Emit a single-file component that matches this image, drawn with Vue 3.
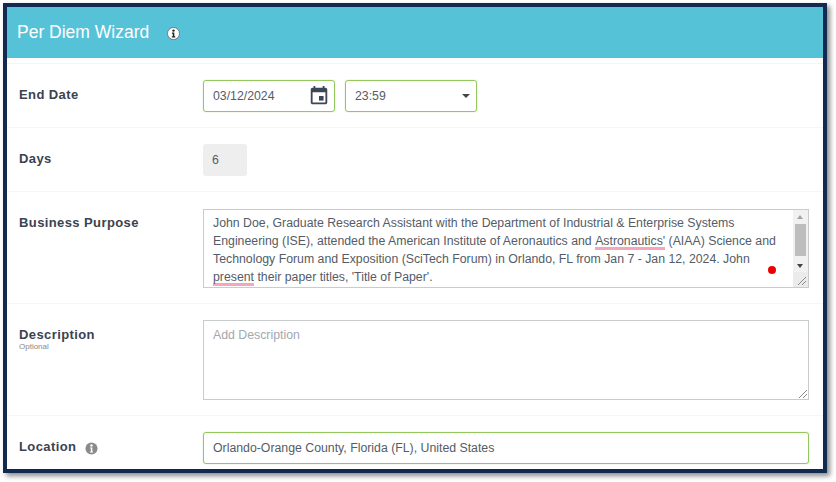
<script setup>
const lines = [
  { id: 1, parts: [{ t: 'John Doe, Graduate Research Assistant with the Department of Industrial & Enterprise Systems' }] },
  { id: 2, parts: [{ t: 'Engineering (ISE), attended the American Institute of Aeronautics and ' }, { t: "Astronautics'", bad: true }, { t: ' (AIAA) Science and' }] },
  { id: 3, parts: [{ t: 'Technology Forum and Exposition (SciTech Forum) in Orlando, FL from Jan 7 - Jan 12, 2024. John' }] },
  { id: 4, parts: [{ t: 'present', bad: true }, { t: " their paper titles, 'Title of Paper'." }] }
]
</script>

<template>
  <div class="page">
    <main class="frame">
      <header class="head">
        <h1 class="title">Per Diem Wizard</h1>
        <svg class="info-white" viewBox="0 0 14 14" width="13" height="13">
          <circle cx="7" cy="7" r="6.5" fill="#fff" stroke="#6b7278" stroke-width="1" />
          <circle cx="7" cy="3.9" r="1.3" fill="#222" />
          <path d="M5.3 6h2.6v4h1v1.2H5.2V10h1V7.2h-.9z" fill="#222" />
        </svg>
      </header>
      <div class="form">
        <section class="row row-date">
          <div class="label"><span>End Date</span></div>
          <div class="controls">
            <div class="field green date">
              <span>03/12/2024</span>
              <svg viewBox="0 0 24 24" width="22" height="22" class="cal">
                <path d="M19 3h-1V1h-2v2H8V1H6v2H5c-1.1 0-2 .9-2 2v14c0 1.1.9 2 2 2h14c1.1 0 2-.9 2-2V5c0-1.1-.9-2-2-2zm0 16H5V8h14v11z" fill="#3d4656" />
                <rect x="12" y="12" width="5" height="5" fill="#3d4656" />
              </svg>
            </div>
            <div class="field green time">
              <span>23:59</span>
              <i class="caret"></i>
            </div>
          </div>
        </section>
        <section class="row row-days">
          <div class="label"><span>Days</span></div>
          <div class="controls"><div class="days">6</div></div>
        </section>
        <section class="row row-purpose">
          <div class="label"><span>Business Purpose</span></div>
          <div class="controls">
            <div class="area purpose">
              <div class="line" v-for="l in lines" :key="l.id">
                <span v-for="p in l.parts" :key="p.t" :class="{ bad: p.bad }">{{ p.t }}</span>
              </div>
              <div class="scrollbar">
                <i class="up"></i>
                <b class="thumb"></b>
                <i class="down"></i>
              </div>
              <div class="corner">
                <svg viewBox="0 0 14 14" width="14" height="14">
                  <path d="M13 5 5 13M13 9l-4 4" stroke="#888" stroke-width="1" fill="none" />
                </svg>
              </div>
              <i class="dot"></i>
            </div>
          </div>
        </section>
        <section class="row row-desc">
          <div class="label">
            <span>Description</span>
            <small>Optional</small>
          </div>
          <div class="controls">
            <div class="area desc">
              <div class="placeholder">Add Description</div>
              <svg class="grip" viewBox="0 0 14 14" width="14" height="14">
                <path d="M13 5 5 13M13 9l-4 4" stroke="#888" stroke-width="1" fill="none" />
              </svg>
            </div>
          </div>
        </section>
        <section class="row row-loc">
          <div class="label loc-label">
            <span>Location</span>
            <svg viewBox="0 0 14 14" width="13" height="13">
              <circle cx="7" cy="7" r="6.5" fill="#8a8a8a" />
              <circle cx="7" cy="3.7" r="1.3" fill="#fff" />
              <path d="M5.4 6h2.5v4.2h.9v1H5.3v-1h1V7h-.9z" fill="#fff" />
            </svg>
          </div>
          <div class="controls">
            <div class="field green loc">Orlando-Orange County, Florida (FL), United States</div>
          </div>
        </section>
      </div>
    </main>
  </div>
</template>

<style scoped>
.page {
  width: 836px;
  height: 482px;
  padding: 3px 0 0 3px;
  box-sizing: border-box;
  background: #fff;
  font-family: "Liberation Sans", Arial, sans-serif;
  overflow: hidden;
}
.frame {
  width: 824px;
  height: 470px;
  box-sizing: border-box;
  border: 4px solid #132a50;
  background: #fff;
  box-shadow: 3px 3px 5px rgba(0, 0, 0, 0.45);
  overflow: hidden;
}
.head {
  height: 51px;
  background: #56c2d8;
  display: flex;
  align-items: center;
  padding-left: 10px;
  gap: 18px;
}
.title {
  margin: 0;
  font-size: 17.5px;
  font-weight: 400;
  color: #fff;
}
.info-white { margin-top: 1px; }
.form { padding-top: 5px; }
.row {
  display: flex;
  border-bottom: 1px solid #f5f5f5;
  box-sizing: border-box;
}
.row-date { height: 65px; padding-top: 16px; border-top: 1px solid #f5f5f5; }
.row-days { height: 64px; padding-top: 16px; }
.row-purpose { height: 112px; padding-top: 17px; }
.row-desc { height: 112px; padding-top: 16px; }
.row-loc { height: 60px; padding-top: 16px; border-bottom: 0; }
.label {
  width: 196px;
  padding-left: 12px;
  box-sizing: border-box;
  font-size: 13px;
  font-weight: 700;
  letter-spacing: 0.4px;
  color: #3b4250;
  line-height: 15px;
}
.label span { display: block; margin-top: 7px; }
.row-purpose .label span { margin-top: 6px; }
.label small {
  display: block;
  margin-top: 1px;
  font-size: 8px;
  font-weight: 400;
  letter-spacing: 0;
  line-height: 8px;
  color: #888;
}
.loc-label { display: flex; align-items: flex-start; gap: 9px; }
.loc-label svg { margin-top: 10px; }
.controls { display: flex; gap: 10px; flex: 1; }
.field {
  height: 32px;
  box-sizing: border-box;
  display: flex;
  align-items: center;
  justify-content: space-between;
  padding-left: 9px;
  font-size: 12.3px;
  color: #555c66;
  border-radius: 3px;
}
.green { border: 1px solid #93c85a; box-shadow: 0 0 1px #93c85a; }
.date { width: 132px; padding-right: 4px; }
.time { width: 132px; padding-right: 6px; }
.caret {
  width: 0;
  height: 0;
  border-left: 4px solid transparent;
  border-right: 4px solid transparent;
  border-top: 4px solid #444;
}
.days {
  width: 44px;
  height: 32px;
  background: #eeeeee;
  border-radius: 3px;
  font-size: 12.3px;
  color: #555c66;
  line-height: 32px;
  padding-left: 9px;
  box-sizing: border-box;
}
.area {
  position: relative;
  width: 606px;
  box-sizing: border-box;
  border: 1px solid #c8cccc;
  font-size: 12.3px;
  color: #555c66;
}
.purpose { height: 79px; padding: 5px 0 0 9px; }
.desc { height: 80px; padding: 6px 0 0 9px; }
.line { height: 18px; line-height: 16.5px; white-space: nowrap; }
.bad { display: inline-block; line-height: 12px; border-bottom: 3px solid #f6a6ba; }
.placeholder { color: #a4a8ad; line-height: 16px; }
.grip { position: absolute; right: 0; bottom: 0; }
.scrollbar {
  position: absolute;
  top: 0;
  right: 0;
  width: 15px;
  height: 62px;
  background: #f1f1f1;
}
.up, .down {
  position: absolute;
  left: 4px;
  width: 0;
  height: 0;
  border-left: 3px solid transparent;
  border-right: 3px solid transparent;
}
.up { top: 5px; border-bottom: 4px solid #a3a3a3; }
.down { bottom: 4px; border-top: 4px solid #444; }
.thumb {
  position: absolute;
  top: 14px;
  left: 2px;
  width: 11px;
  height: 32px;
  background: #bdbdbd;
}
.corner {
  position: absolute;
  right: 0;
  bottom: 0;
  width: 15px;
  height: 15px;
  background: #ebebeb;
}
.dot {
  position: absolute;
  left: 564px;
  top: 56px;
  width: 8px;
  height: 8px;
  border-radius: 50%;
  background: #ee0000;
}
.loc { width: 606px; justify-content: flex-start; }
</style>
